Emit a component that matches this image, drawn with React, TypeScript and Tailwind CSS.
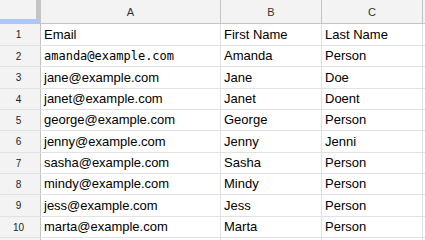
import React from "react";

const rows: { email: string; first: string; last: string; h: string; mono?: boolean }[] = [
  { email: "Email", first: "First Name", last: "Last Name", h: "h-[22px]" },
  { email: "amanda@example.com", first: "Amanda", last: "Person", h: "h-[21px]", mono: true },
  { email: "jane@example.com", first: "Jane", last: "Doe", h: "h-[22px]" },
  { email: "janet@example.com", first: "Janet", last: "Doent", h: "h-[21px]" },
  { email: "george@example.com", first: "George", last: "Person", h: "h-[21px]" },
  { email: "jenny@example.com", first: "Jenny", last: "Jenni", h: "h-[22px]" },
  { email: "sasha@example.com", first: "Sasha", last: "Person", h: "h-[21px]" },
  { email: "mindy@example.com", first: "Mindy", last: "Person", h: "h-[21px]" },
  { email: "jess@example.com", first: "Jess", last: "Person", h: "h-[22px]" },
  { email: "marta@example.com", first: "Marta", last: "Person", h: "h-[21px]" },
];

export default function App() {
  return (
    <div
      className="w-[425px] h-[240px] overflow-hidden bg-white text-[13px] text-[#000]"
      style={{ fontFamily: '"Liberation Sans", Arial, sans-serif' }}
    >
      {/* header */}
      <div className="flex h-[24px] bg-[#f3f3f3] border-b border-[#c4c4c4] text-[11px] text-[#333]">
        <div className="relative w-[41px] shrink-0 border-r border-[#c4c4c4] flex">
          <div className="w-[36px]" />
          <div className="w-[4px] bg-[#c4c4c4]" />
          <div className="absolute left-0 bottom-0 w-[40px] h-[4px] bg-[#a9c7fb]" />
        </div>
        <div className="w-[180px] shrink-0 border-r border-[#c4c4c4] flex items-center justify-center pt-[1px]">A</div>
        <div className="w-[101px] shrink-0 border-r border-[#c4c4c4] flex items-center justify-center pt-[1px]">B</div>
        <div className="w-[101px] shrink-0 border-r border-[#c4c4c4] flex items-center justify-center pt-[1px]">C</div>
        <div className="flex-1" />
      </div>
      {rows.map((r, i) => (
        <div key={i} className={`flex ${r.h} border-b border-[#e2e2e2]`}>
          <div className="w-[41px] shrink-0 bg-[#f3f3f3] border-r border-[#c4c4c4] flex items-center justify-center text-[10px] text-[#222] pr-[3px]">
            {i + 1}
          </div>
          <div
            className={`w-[180px] shrink-0 border-r border-[#e2e2e2] flex items-center pl-[3px] whitespace-nowrap ${r.mono ? "text-[12px]" : ""}`}
            style={r.mono ? { fontFamily: '"DejaVu Sans Mono", monospace' } : undefined}
          >
            {r.email}
          </div>
          <div className="w-[101px] shrink-0 border-r border-[#e2e2e2] flex items-center pl-[3px] whitespace-nowrap">
            {r.first}
          </div>
          <div className="w-[101px] shrink-0 border-r border-[#e2e2e2] flex items-center pl-[3px] whitespace-nowrap">
            {r.last}
          </div>
          <div className="flex-1" />
        </div>
      ))}
      <div className="flex h-[10px]">
        <div className="w-[41px] shrink-0 bg-[#f3f3f3] border-r border-[#c4c4c4]" />
        <div className="w-[180px] shrink-0 border-r border-[#e2e2e2]" />
        <div className="w-[101px] shrink-0 border-r border-[#e2e2e2]" />
        <div className="w-[101px] shrink-0 border-r border-[#e2e2e2]" />
      </div>
    </div>
  );
}
